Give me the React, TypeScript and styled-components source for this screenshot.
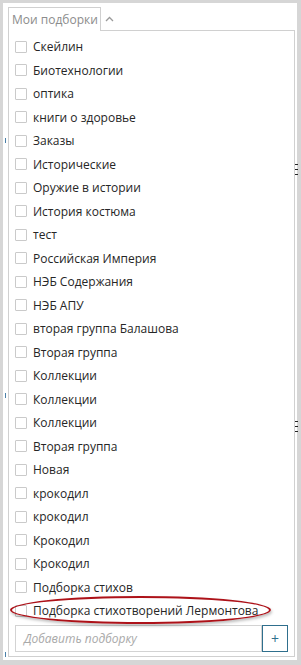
import React, { ReactElement } from 'react'
import styled, { createGlobalStyle } from 'styled-components'

const GlobalStyle = createGlobalStyle`
  html, body {
    margin: 0;
    padding: 0;
    background: #d6d6d6;
  }
  * {
    box-sizing: border-box;
  }
`

const Frame = styled.div`
  position: relative;
  width: 301px;
  height: 665px;
  padding: 3px 4px 5px 3px;
  background: #d6d6d6;
  font-family: 'Open Sans', 'Noto Sans', sans-serif;
`

const Page = styled.div`
  height: 100%;
  background: #fff;
  padding: 4px 2px 0 5px;
  display: flex;
  flex-direction: column;
`

const Header = styled.div`
  display: flex;
  align-items: stretch;
  height: 24px;
`

const Tab = styled.div`
  width: 93px;
  border: 1px solid #d0d0d0;
  border-bottom: none;
  padding: 0 0 0 3px;
  display: flex;
  align-items: center;
  font-size: 12px;
  white-space: nowrap;
  color: #8c8c8c;
  background: #fff;
`

const HeaderRest = styled.div`
  flex: 1;
  display: flex;
  align-items: center;
  padding-left: 4px;
  border-bottom: 1px solid #d0d0d0;
`

const Panel = styled.div`
  position: relative;
  width: 287px;
  border: 1px solid #d0d0d0;
  border-top: none;
  padding: 4px 0 4px 6px;
  display: flex;
  flex-direction: column;
`

const List = styled.ul`
  list-style: none;
  margin: 0;
  padding: 0;
`

const Row = styled.li`
  height: 23.5px;
  display: flex;
  align-items: center;
  gap: 6px;
  font-size: 12px;
  color: #262626;
  white-space: nowrap;
`

const Box = styled.span`
  width: 12px;
  height: 12px;
  border: 1px solid #cacaca;
  border-radius: 1px;
  background: #fff;
  flex-shrink: 0;
`

const AddRow = styled.div`
  display: flex;
  margin-top: 2px;
  height: 27px;
`

const AddInput = styled.div`
  width: 247px;
  border: 1px solid #d3d3d3;
  display: flex;
  align-items: center;
  padding-left: 8px;
  font-size: 12px;
  font-style: italic;
  color: #a9a9a9;
`

const AddButton = styled.div`
  width: 26px;
  border: 1px solid #2f6f8d;
  display: flex;
  align-items: center;
  justify-content: center;
  font-size: 14px;
  color: #2f6f8d;
`

const Highlight = styled.div`
  position: absolute;
  left: 1px;
  top: 565px;
  width: 261px;
  height: 28px;
  border: 2.5px solid #ad1219;
  border-radius: 50%;
  box-shadow: 1px 2px 3px rgba(0, 0, 0, 0.25);
  pointer-events: none;
`

const Marks = styled.div<{ $top: number }>`
  position: absolute;
  right: 3px;
  top: ${props => props.$top}px;
  width: 3px;
  height: 12px;
  background: repeating-linear-gradient(#222 0 1px, transparent 1px 5px);
`

const EdgeTick = styled.div<{ $top: number }>`
  position: absolute;
  left: 5px;
  top: ${props => props.$top}px;
  width: 1px;
  height: 5px;
  background: #4a80a8;
`

const items = [
  'Скейлин',
  'Биотехнологии',
  'оптика',
  'книги о здоровье',
  'Заказы',
  'Исторические',
  'Оружие в истории',
  'История костюма',
  'тест',
  'Российская Империя',
  'НЭБ Содержания',
  'НЭБ АПУ',
  'вторая группа Балашова',
  'Вторая группа',
  'Коллекции',
  'Коллекции',
  'Коллекции',
  'Вторая группа',
  'Новая',
  'крокодил',
  'крокодил',
  'Крокодил',
  'Крокодил',
  'Подборка стихов',
  'Подборка стихотворений Лермонтова',
]

const Caret = (): ReactElement => (
  <svg width='9' height='6' viewBox='0 0 9 6'>
    <path d='M1 5 L4.5 1.5 L8 5' fill='none' stroke='#9a9a9a' strokeWidth='1.3' />
  </svg>
)

const App = (): ReactElement => (
  <Frame>
    <GlobalStyle />
    <Page>
      <Header>
        <Tab>Мои подборки</Tab>
        <HeaderRest>
          <Caret />
        </HeaderRest>
      </Header>
      <Panel>
        <List>
          {items.map((name, i) => (
            <Row key={i}>
              <Box />
              {name}
            </Row>
          ))}
        </List>
        <AddRow>
          <AddInput>Добавить подборку</AddInput>
          <AddButton>+</AddButton>
        </AddRow>
        <Highlight />
      </Panel>
    </Page>
    <Marks $top={164} />
    <Marks $top={421} />
    <EdgeTick $top={138} />
    <EdgeTick $top={393} />
    <EdgeTick $top={652} />
  </Frame>
)

export default App
